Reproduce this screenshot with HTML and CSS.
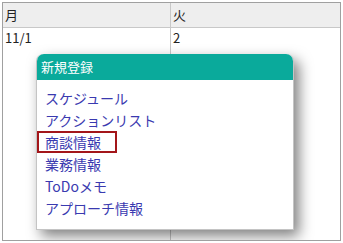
FILE: index.html
```
<!DOCTYPE html>
<html lang="ja">
<head>
<meta charset="utf-8">
<link rel="stylesheet" href="styles.css">
</head>
<body>
<div class="frame">
  <div class="row head">
    <div class="cell c1">月</div>
    <div class="cell c2">火</div>
  </div>
  <div class="row date">
    <div class="cell c1">11/1</div>
    <div class="cell c2">2</div>
  </div>
  <div class="row body">
    <div class="cell c1"></div>
    <div class="cell c2"></div>
  </div>
  <div class="popup">
    <div class="popup-head">新規登録</div>
    <ul class="menu">
      <li class="item">スケジュール</li>
      <li class="item">アクションリスト</li>
      <li class="item selected">商談情報</li>
      <li class="item">業務情報</li>
      <li class="item">ToDoメモ</li>
      <li class="item">アプローチ情報</li>
    </ul>
  </div>
</div>
</body>
</html>
```
FILE: styles.css
```
html, body {
  margin: 0;
  padding: 0;
  background: #fff;
}
body {
  font-family: "Noto Sans CJK JP", "Noto Sans", sans-serif;
  width: 343px;
  height: 243px;
  overflow: hidden;
}
.frame {
  position: relative;
  margin: 2px;
  width: 337px;
  height: 237px;
  border: 1px solid #a0a0a0;
  display: flex;
  flex-direction: column;
  overflow: hidden;
}
.row {
  display: flex;
}
.cell {
  font-size: 13px;
  color: #222;
  padding-left: 2px;
  box-sizing: border-box;
}
.c1 {
  width: 168px;
  border-right: 1px solid #c8c8c8;
}
.c2 {
  flex: 1;
}
.head {
  height: 24px;
  background: #eeeeee;
  border-bottom: 1px solid #c8c8c8;
  align-items: center;
}
.head .cell {
  height: 24px;
  line-height: 24px;
}
.date .cell {
  height: 20px;
  line-height: 19px;
}
.body {
  flex: 1;
}
.popup {
  position: absolute;
  left: 33px;
  top: 51px;
  width: 258px;
  height: 176px;
  background: #fff;
  border-radius: 7px 7px 0 0;
  box-shadow: 5px 6px 14px rgba(0, 0, 0, 0.5);
  border: 1px solid #c4c4c4;
  border-top: none;
  box-sizing: border-box;
}
.popup-head {
  height: 26px;
  line-height: 26px;
  background: #0aaa9b;
  color: #fff;
  font-size: 13px;
  padding-left: 4px;
  border-radius: 7px 7px 0 0;
}
.menu {
  list-style: none;
  margin: 0;
  padding: 7px 0 0 0;
}
.item {
  width: fit-content;
  height: 22px;
  line-height: 18px;
  box-sizing: border-box;
  border: 2px solid transparent;
  padding: 0 14px 0 6px;
  font-size: 14px;
  color: #3a3ab0;
}
.item.selected {
  border-color: #a3161a;
}
```
